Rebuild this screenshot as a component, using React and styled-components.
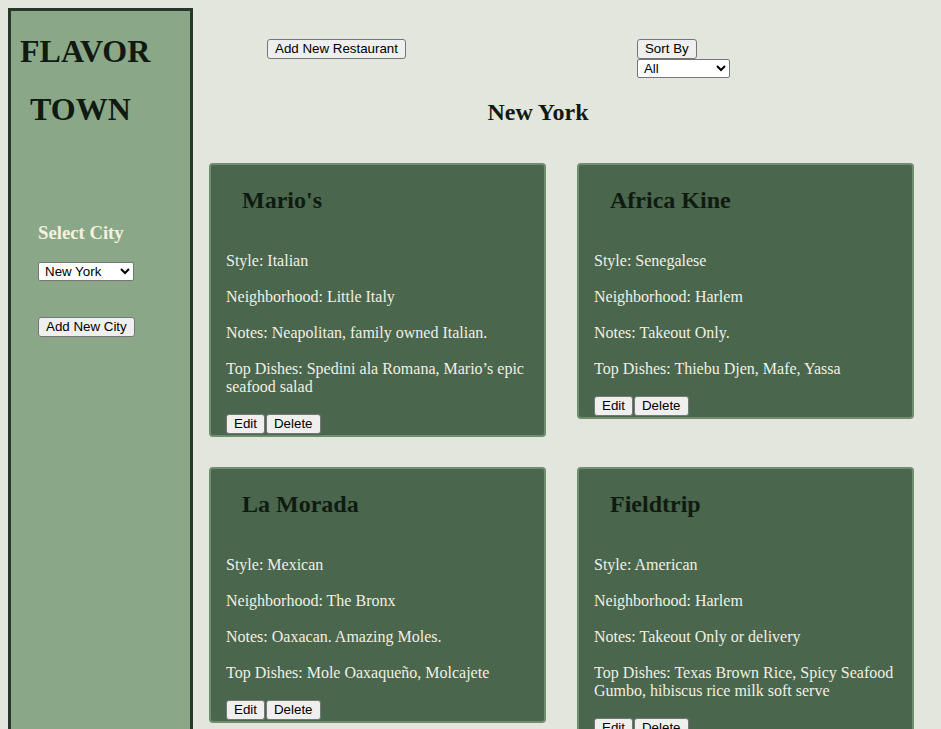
import React from "react";
import styled, { createGlobalStyle } from "styled-components";

const GlobalStyle = createGlobalStyle`
  body {
    margin: 8px;
    background: #e2e6dc;
    font-family: "Liberation Serif", "Times New Roman", serif;
  }
`;

const Layout = styled.div`
  display: flex;
  align-items: stretch;
  min-height: calc(100vh + 40px);
`;

const Sidebar = styled.aside`
  width: 185px;
  flex-shrink: 0;
  background: #8aa888;
  border: 3px solid #27382a;
  border-bottom: none;
  padding-left: 9px;
  box-sizing: border-box;
`;

const Logo = styled.h1`
  font-size: 32px;
  line-height: 36.8px;
  margin: 21.5px 0;
  color: #101a11;
  padding-left: ${(props) => props.indent || 0}px;
`;

const CityPanel = styled.div`
  padding-left: 18px;
  margin-top: 94px;
`;

const PanelTitle = styled.h3`
  font-size: 18.72px;
  line-height: 21.5px;
  color: #f6f0de;
  margin: 0 0 19px;
`;

const Select = styled.select`
  display: block;
  font: 13.333px "Liberation Sans", Arial, sans-serif;
  width: ${(props) => props.width}px;
  height: 19px;
  padding: 0 2px;
  background: #fff;
  border: 1px solid #767676;
  border-radius: 2px;
  color: #000;
  box-sizing: border-box;
`;

const Button = styled.button`
  font: 13.333px "Liberation Sans", Arial, sans-serif;
  color: #000;
  background: #efefef;
  border: 1px solid #767676;
  border-radius: 3px;
  padding: 1px 7px;
  height: 20px;
  box-sizing: border-box;
  line-height: 16px;
  margin-top: ${(props) => props.top || 0}px;
`;

const Main = styled.main`
  flex: 1;
`;

const Header = styled.div`
  display: flex;
  align-items: flex-start;
  padding-left: 74px;
  margin-top: 31px;
  gap: 231px;
`;

const SortBox = styled.div`
  display: flex;
  flex-direction: column;
  align-items: flex-start;
`;

const CityTitle = styled.h2`
  font-size: 24px;
  line-height: 27.6px;
  color: #111a12;
  text-align: center;
  margin: 21px 0 36px;
  padding-right: 50px;
`;

const Grid = styled.div`
  display: grid;
  grid-template-columns: 337px 337px;
  column-gap: 31px;
  row-gap: 30px;
  align-items: start;
  padding-left: 16px;
`;

const Card = styled.div`
  background: #4a664c;
  border: 2px solid #6e8e6e;
  border-radius: 4px;
  padding: 0 15px 1px;
`;

const CardTitle = styled.h2`
  font-size: 24px;
  line-height: 27.6px;
  color: #0f1b11;
  margin: 22.5px 0 37px 16px;
`;

const Field = styled.p`
  font-size: 16px;
  line-height: 18px;
  color: #f1efe6;
  margin: 0 0 18px;
`;

const Actions = styled.div`
  display: flex;
  gap: 1px;
  margin-top: 1px;
`;

const restaurants = [
  {
    name: "Mario's",
    style: "Italian",
    neighborhood: "Little Italy",
    notes: "Neapolitan, family owned Italian.",
    dishes: "Spedini ala Romana, Mario’s epic seafood salad",
  },
  {
    name: "Africa Kine",
    style: "Senegalese",
    neighborhood: "Harlem",
    notes: "Takeout Only.",
    dishes: "Thiebu Djen, Mafe, Yassa",
  },
  {
    name: "La Morada",
    style: "Mexican",
    neighborhood: "The Bronx",
    notes: "Oaxacan. Amazing Moles.",
    dishes: "Mole Oaxaqueño, Molcajete",
  },
  {
    name: "Fieldtrip",
    style: "American",
    neighborhood: "Harlem",
    notes: "Takeout Only or delivery",
    dishes: "Texas Brown Rice, Spicy Seafood Gumbo, hibiscus rice milk soft serve",
  },
];

const RestaurantCard = ({ r }) => (
  <Card>
    <CardTitle>{r.name}</CardTitle>
    <Field>Style: {r.style}</Field>
    <Field>Neighborhood: {r.neighborhood}</Field>
    <Field>Notes: {r.notes}</Field>
    <Field>Top Dishes: {r.dishes}</Field>
    <Actions>
      <Button>Edit</Button>
      <Button>Delete</Button>
    </Actions>
  </Card>
);

export default function App() {
  return (
    <>
      <GlobalStyle />
      <Layout>
        <Sidebar>
          <Logo>FLAVOR</Logo>
          <Logo indent={10}>TOWN</Logo>
          <CityPanel>
            <PanelTitle>Select City</PanelTitle>
            <Select width={96} defaultValue="New York">
              <option>New York</option>
            </Select>
            <Button top={36}>Add New City</Button>
          </CityPanel>
        </Sidebar>
        <Main>
          <Header>
            <Button>Add New Restaurant</Button>
            <SortBox>
              <Button>Sort By</Button>
              <Select width={93} defaultValue="All">
                <option>All</option>
              </Select>
            </SortBox>
          </Header>
          <CityTitle>New York</CityTitle>
          <Grid>
            {restaurants.map((r) => (
              <RestaurantCard key={r.name} r={r} />
            ))}
          </Grid>
        </Main>
      </Layout>
    </>
  );
}
